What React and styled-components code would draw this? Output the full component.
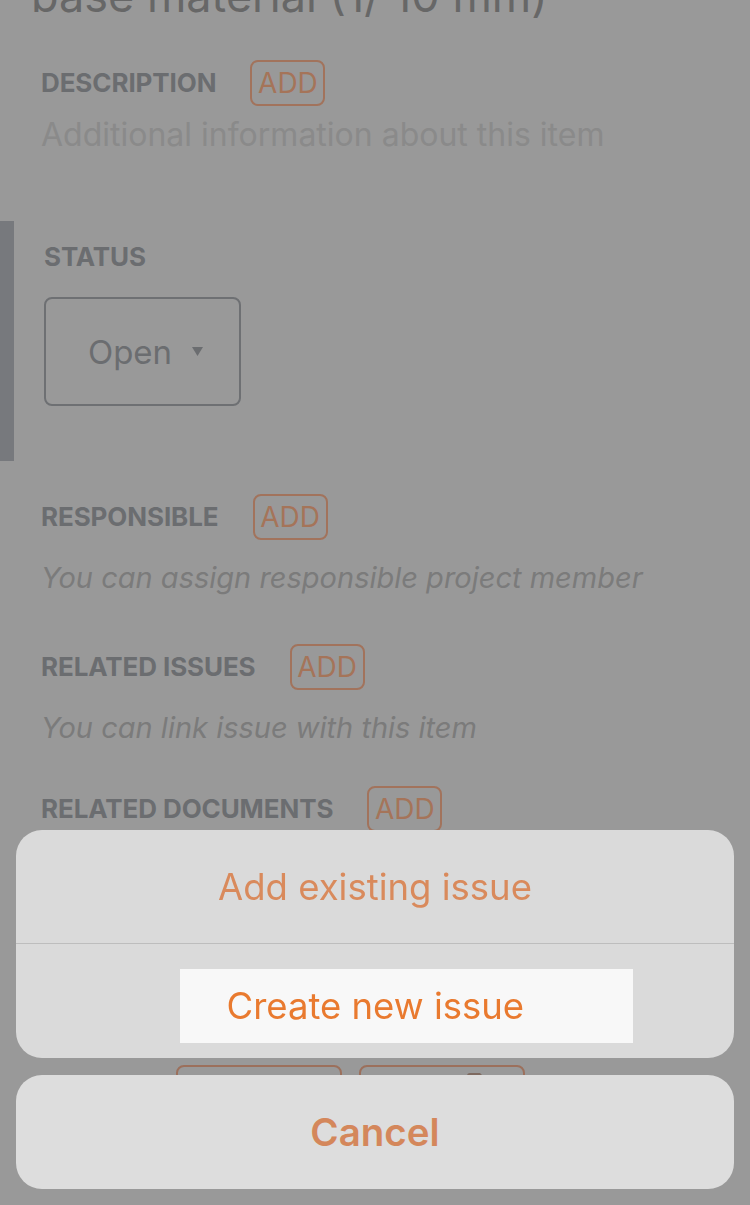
import React from "react";
import styled, { createGlobalStyle } from "styled-components";

const Global = createGlobalStyle`
  html, body {
    margin: 0;
    padding: 0;
    background: #999999;
    overflow: hidden;
    font-family: Inter, "Noto Sans", "Liberation Sans", sans-serif;
  }
  * { box-sizing: border-box; }
`;

const Page = styled.div`
  display: flex;
  flex-direction: column;
  min-height: 1205px;
`;

const Title = styled.h1`
  margin: -31px 0 0 31px;
  font-size: 45px;
  line-height: 54px;
  font-weight: 400;
  color: #676767;
  white-space: nowrap;
`;

const Section = styled.section`
  display: flex;
  flex-direction: column;
  padding-left: 41px;
  margin-top: ${(p) => p.$top}px;
`;

const ActiveSection = styled.section`
  display: flex;
  flex-direction: column;
  align-items: flex-start;
  margin-top: ${(p) => p.$top}px;
  border-left: 14px solid #77797d;
  padding: 22px 0 55px 30px;
`;

const Header = styled.div`
  display: flex;
  align-items: center;
  gap: 34px;
  height: 46px;
`;

const Label = styled.span`
  font-size: 26px;
  line-height: 28px;
  font-weight: 700;
  color: #6b6d70;
  text-transform: uppercase;
  letter-spacing: -0.1px;
`;

const AddButton = styled.button`
  width: 75px;
  height: 46px;
  padding: 0;
  border: 2px solid #a2735c;
  border-radius: 8px;
  background: transparent;
  font-family: inherit;
  font-size: 28px;
  color: #a57459;
`;

const Hint = styled.p`
  margin: ${(p) => p.$gap}px 0 0;
  font-size: ${(p) => (p.$italic ? 29 : 32)}px;
  line-height: 36px;
  font-style: ${(p) => (p.$italic ? "italic" : "normal")};
  color: ${(p) => (p.$italic ? "#7b7b7b" : "#8a8a8a")};
  white-space: nowrap;
`;

const Select = styled.button`
  margin-top: 26px;
  width: 197px;
  height: 109px;
  display: flex;
  align-items: center;
  justify-content: center;
  gap: 20px;
  border: 2px solid #6e7073;
  border-radius: 8px;
  background: transparent;
  font-family: inherit;
  font-size: 33px;
  color: #6b6d70;
  padding: 0 0 0 6px;
`;

const ButtonRow = styled.div`
  display: flex;
  gap: 17px;
  margin: ${(p) => p.$top}px 0 0 135px;
`;

const GhostButton = styled.div`
  width: 166px;
  height: 60px;
  border: 2px solid #9c705c;
  border-radius: 8px;
  display: flex;
  justify-content: flex-end;
  padding: 6px 36px 0 0;
`;

const Sheet = styled.div`
  position: fixed;
  left: 16px;
  right: 16px;
  bottom: 16px;
  display: flex;
  flex-direction: column;
  gap: 17px;
`;

const Group = styled.div`
  background: #dadada;
  border-radius: 26px;
  overflow: hidden;
  display: flex;
  flex-direction: column;
`;

const Action = styled.div`
  height: 114px;
  display: flex;
  align-items: center;
  justify-content: center;
  font-size: 36.5px;
  color: ${(p) => p.$color || "#d98a5c"};
  border-bottom: ${(p) => (p.$divider ? "1px solid #bdbdbd" : "none")};
`;

const Pressed = styled.span`
  width: 453px;
  height: 74px;
  margin: 10px 0 0 62px;
  display: flex;
  align-items: center;
  padding-left: 47px;
  background: #f8f8f8;
  color: #e97a2f;
`;

const CancelButton = styled.div`
  height: 114px;
  background: #dddddd;
  border-radius: 26px;
  display: flex;
  align-items: center;
  justify-content: center;
  font-size: 38.5px;
  font-weight: 600;
  color: #d4875b;
`;

const Caret = () => (
  <svg width="11" height="9" viewBox="0 0 11 9">
    <path d="M0 0 H11 L5.5 9 Z" fill="#6b6d70" />
  </svg>
);

const FileIcon = () => (
  <svg width="20" height="12" viewBox="0 0 20 12">
    <path d="M0 3 Q0 0 3 0 H13 L20 7 V12 H0 Z" fill="#7e6a60" />
  </svg>
);

export default function App() {
  return (
    <>
      <Global />
      <Page>
        <Title>base material (1/ 10 mm)</Title>

        <Section $top={37}>
          <Header>
            <Label>Description</Label>
            <AddButton>ADD</AddButton>
          </Header>
          <Hint $gap={11}>Additional information about this item</Hint>
        </Section>

        <ActiveSection $top={68}>
          <Label>Status</Label>
          <Select>
            Open <Caret />
          </Select>
        </ActiveSection>

        <Section $top={33}>
          <Header>
            <Label>Responsible</Label>
            <AddButton>ADD</AddButton>
          </Header>
          <Hint $gap={20} $italic>
            You can assign responsible project member
          </Hint>
        </Section>

        <Section $top={48}>
          <Header>
            <Label>Related issues</Label>
            <AddButton>ADD</AddButton>
          </Header>
          <Hint $gap={20} $italic>
            You can link issue with this item
          </Hint>
        </Section>

        <Section $top={40}>
          <Header>
            <Label>Related documents</Label>
            <AddButton>ADD</AddButton>
          </Header>
          <Hint $gap={20} $italic>
            You can link document with this item
          </Hint>
          <ButtonRow $top={177}>
            <GhostButton />
            <GhostButton>
              <FileIcon />
            </GhostButton>
          </ButtonRow>
        </Section>
      </Page>

      <Sheet>
        <Group>
          <Action $divider>Add existing issue</Action>
          <Action>
            <Pressed>Create new issue</Pressed>
          </Action>
        </Group>
        <CancelButton>Cancel</CancelButton>
      </Sheet>
    </>
  );
}
